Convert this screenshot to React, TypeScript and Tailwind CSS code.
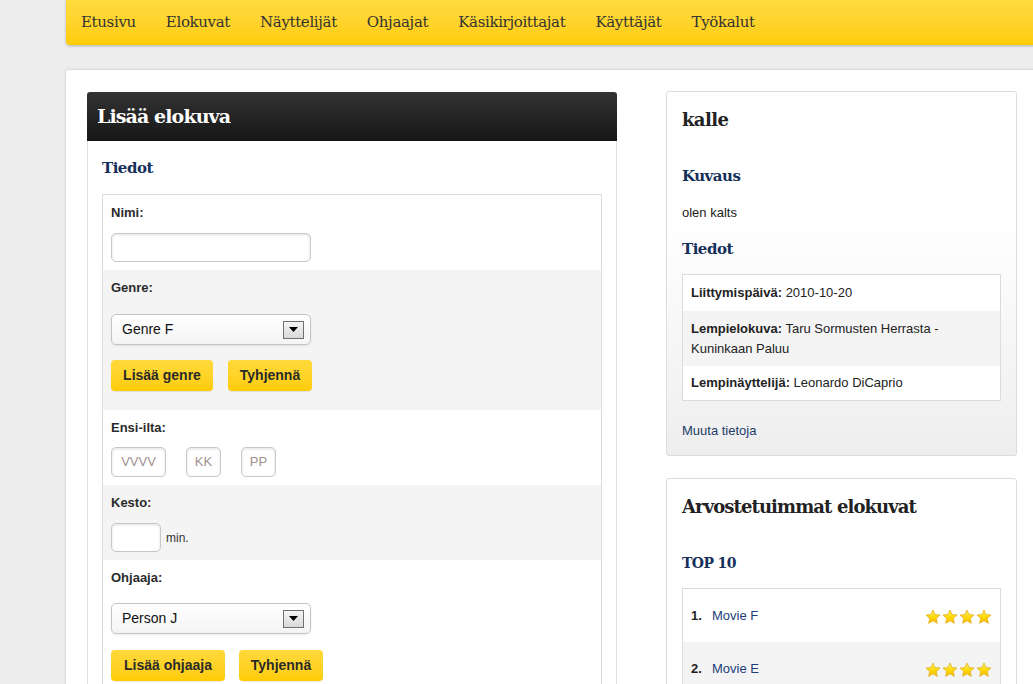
import React from "react";

const Star = ({ id }: { id: string }) => (
  <svg width="16" height="16" viewBox="0 0 24 24" className="block">
    <defs>
      <linearGradient id={id} x1="0" y1="0" x2="0" y2="1">
        <stop offset="0" stopColor="#fff46a" />
        <stop offset="0.6" stopColor="#ffd500" />
        <stop offset="1" stopColor="#f5b800" />
      </linearGradient>
    </defs>
    <polygon
      points="12,1.5 15.1,8.3 22.5,9.1 16.9,14.1 18.5,21.5 12,17.7 5.5,21.5 7.1,14.1 1.5,9.1 8.9,8.3"
      fill={`url(#${id})`}
      stroke="#e0b020"
      strokeWidth="1.2"
      strokeLinejoin="round"
    />
  </svg>
);

const Stars = ({ k }: { k: string }) => (
  <div className="flex gap-[1px]">
    {[0, 1, 2, 3].map((i) => (
      <Star key={i} id={`st-${k}-${i}`} />
    ))}
  </div>
);

const SelectBox = ({ value }: { value: string }) => (
  <div className="flex h-[31px] w-[200px] items-center justify-between rounded-[5px] border border-[#c4c4c4] bg-gradient-to-b from-white to-[#f4f4f4] pl-[10px] pr-[6px] shadow-[0_1px_2px_rgba(0,0,0,0.08)]">
    <span className="text-[14px] text-[#111]">{value}</span>
    <div className="flex h-[18px] w-[21px] items-center justify-center border border-[#707070] bg-gradient-to-b from-[#f6f6f6] to-[#d8d8d8]">
      <svg width="9" height="5" viewBox="0 0 9 5">
        <polygon points="0,0 9,0 4.5,5" fill="#000" />
      </svg>
    </div>
  </div>
);

const Btn = ({ children, w }: { children: React.ReactNode; w: string }) => (
  <div
    className={`flex h-[31px] ${w} items-center justify-center rounded-[4px] bg-gradient-to-b from-[#ffd93a] to-[#ffcc00] text-[14px] font-bold text-[#2a2a2a] shadow-[0_1px_1px_rgba(0,0,0,0.08)]`}
  >
    {children}
  </div>
);

const Input = ({ w, h, ph }: { w: string; h: string; ph?: string }) => (
  <div
    className={`flex ${w} ${h} items-center justify-center rounded-[5px] border border-[#c8c8c8] bg-white text-[13px] text-[#a09090] shadow-[inset_0_1px_3px_rgba(0,0,0,0.12)]`}
  >
    {ph}
  </div>
);

const Label = ({ children }: { children: React.ReactNode }) => (
  <div className="h-[20px] text-[13px] font-bold leading-[20px] text-[#2b2b2b]">{children}</div>
);

export default function App() {
  const serif = "font-['DejaVu_Serif',serif]";
  const navItems = [
    "Etusivu",
    "Elokuvat",
    "Näyttelijät",
    "Ohjaajat",
    "Käsikirjoittajat",
    "Käyttäjät",
    "Työkalut",
  ];
  return (
    <div className="h-[684px] w-[1033px] overflow-hidden bg-[#ededed] font-['Liberation_Sans',Arial,sans-serif] text-[#222]">
      <div className="ml-[66px] w-[1000px]">
        {/* Nav */}
        <nav className="flex h-[45px] items-center rounded-bl-[4px] bg-gradient-to-b from-[#ffdb3f] to-[#ffcc00] pl-[15px] shadow-[0_1px_3px_rgba(0,0,0,0.25)]">
          {navItems.map((n) => (
            <span key={n} className={`${serif} mr-[30px] text-[15px] tracking-[-0.35px] text-[#333]`}>
              {n}
            </span>
          ))}
        </nav>

        {/* Main */}
        <div className="mt-[25px] flex h-[700px] w-[972px] gap-[49px] rounded-tl-[3px] bg-white px-[21px] pt-[22px] shadow-[0_0_3px_rgba(0,0,0,0.2)]">
          {/* Left */}
          <div className="w-[530px]">
            <div className="flex h-[49px] items-center rounded-t-[3px] bg-gradient-to-b from-[#343434] to-[#161616] pl-[10px]">
              <span className={`${serif} text-[19px] font-bold tracking-[-0.9px] text-white`}>Lisää elokuva</span>
            </div>
            <div className="h-[700px] border-x border-[#dedede] px-[14px]">
              <div className={`${serif} flex h-[53px] items-center pt-[1px] text-[15px] font-bold tracking-[-0.5px] text-[#14305a]`}>
                Tiedot
              </div>
              <div className="border border-[#dcdcdc]">
                <div className="bg-white px-[8px] pb-[8px] pt-[8px]">
                  <Label>Nimi:</Label>
                  <div className="mt-[10px]">
                    <Input w="w-[200px]" h="h-[29px]" />
                  </div>
                </div>
                <div className="bg-[#f4f4f4] px-[8px] pb-[19px] pt-[8px]">
                  <Label>Genre:</Label>
                  <div className="mt-[16px]">
                    <SelectBox value="Genre F" />
                  </div>
                  <div className="mt-[15px] flex gap-[15px]">
                    <Btn w="w-[102px]">Lisää genre</Btn>
                    <Btn w="w-[84px]">Tyhjennä</Btn>
                  </div>
                </div>
                <div className="bg-white px-[8px] pb-[8px] pt-[8px]">
                  <Label>Ensi-ilta:</Label>
                  <div className="mt-[9px] flex gap-[20px]">
                    <Input w="w-[55px]" h="h-[30px]" ph="VVVV" />
                    <Input w="w-[35px]" h="h-[30px]" ph="KK" />
                    <Input w="w-[35px]" h="h-[30px]" ph="PP" />
                  </div>
                </div>
                <div className="bg-[#f4f4f4] px-[8px] pb-[8px] pt-[8px]">
                  <Label>Kesto:</Label>
                  <div className="mt-[10px] flex items-center gap-[5px]">
                    <Input w="w-[50px]" h="h-[29px]" />
                    <span className="text-[12px] text-[#333]">min.</span>
                  </div>
                </div>
                <div className="bg-white px-[8px] pb-[20px] pt-[8px]">
                  <Label>Ohjaaja:</Label>
                  <div className="mt-[15px]">
                    <SelectBox value="Person J" />
                  </div>
                  <div className="mt-[16px] flex gap-[14px]">
                    <Btn w="w-[114px]">Lisää ohjaaja</Btn>
                    <Btn w="w-[84px]">Tyhjennä</Btn>
                  </div>
                </div>
              </div>
            </div>
          </div>

          {/* Right */}
          <div className="w-[351px]">
            <div className="-mt-[1px] rounded-[3px] border border-[#dcdcdc] bg-gradient-to-b from-white from-[35%] to-[#eeeeee] px-[15px] pb-[16px]">
              <div className={`${serif} flex h-[54px] items-center text-[18px] font-bold tracking-[-0.6px] text-[#222]`}>
                kalle
              </div>
              <div className={`${serif} mt-[18px] flex h-[25px] items-center text-[15px] font-bold tracking-[-0.5px] text-[#14305a]`}>
                Kuvaus
              </div>
              <div className="mt-[16px] text-[13px] leading-[16px] text-[#222]">olen kalts</div>
              <div className={`${serif} mt-[16px] flex h-[25px] items-center text-[15px] font-bold tracking-[-0.5px] text-[#14305a]`}>
                Tiedot
              </div>
              <div className="mt-[12px] border border-[#dcdcdc] text-[13px] leading-[20px] text-[#222]">
                <div className="bg-white px-[8px] py-[8px]">
                  <b>Liittymispäivä:</b> 2010-10-20
                </div>
                <div className="bg-[#f4f4f4] py-[7.5px] pl-[8px] pr-[40px]">
                  <b>Lempielokuva:</b> Taru Sormusten Herrasta - Kuninkaan Paluu
                </div>
                <div className="bg-white px-[8px] py-[7px]">
                  <b>Lempinäyttelijä:</b> Leonardo DiCaprio
                </div>
              </div>
              <div className="mt-[22px] text-[13px] leading-[16px] text-[#1d3d66]">Muuta tietoja</div>
            </div>

            <div className="mt-[22px] rounded-[3px] border border-[#dcdcdc] bg-white px-[15px] pb-[16px]">
              <div className={`${serif} flex h-[55px] items-center text-[18px] font-bold tracking-[-0.9px] text-[#222]`}>
                Arvostetuimmat elokuvat
              </div>
              <div className={`${serif} mt-[17px] flex h-[25px] items-center text-[14px] font-bold tracking-[-0.6px] text-[#14305a]`}>
                TOP 10
              </div>
              <div className="mt-[12px] border border-[#dcdcdc] text-[13px] text-[#222]">
                <div className="flex h-[53px] items-center justify-between bg-white px-[8px]">
                  <div className="flex items-center">
                    <b className="w-[21px]">1.</b>
                    <span className="text-[#1d3d7a]">Movie F</span>
                  </div>
                  <div className="mt-[3px]">
                    <Stars k="a" />
                  </div>
                </div>
                <div className="flex h-[53px] items-center justify-between bg-[#f4f4f4] px-[8px]">
                  <div className="flex items-center">
                    <b className="w-[21px]">2.</b>
                    <span className="text-[#1d3d7a]">Movie E</span>
                  </div>
                  <div className="mt-[3px]">
                    <Stars k="b" />
                  </div>
                </div>
              </div>
            </div>
          </div>
        </div>
      </div>
    </div>
  );
}
